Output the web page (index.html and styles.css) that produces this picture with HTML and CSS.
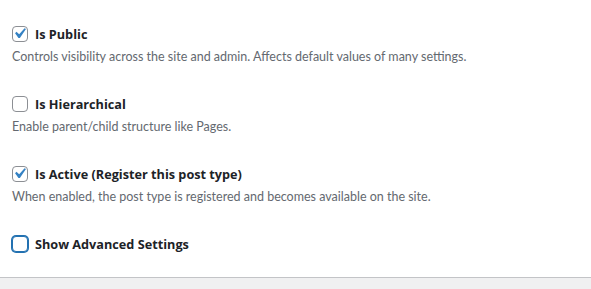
FILE: index.html
```html
<!DOCTYPE html>
<html>
<head>
<meta charset="utf-8">
<link rel="stylesheet" href="styles.css">
</head>
<body>
<div class="panel">
  <div class="field">
    <label class="row"><span class="box"><svg viewBox="0 0 20 20"><path d="M14.83 4.89l1.34.94-5.81 8.38H9.02L5.78 9.67l1.34-1.25 2.57 2.4z" fill="#3582c4"/></svg></span><span class="label">Is Public</span></label>
    <p class="desc">Controls visibility across the site and admin. Affects default values of many settings.</p>
  </div>
  <div class="field">
    <label class="row"><span class="box"></span><span class="label">Is Hierarchical</span></label>
    <p class="desc">Enable parent/child structure like Pages.</p>
  </div>
  <div class="field">
    <label class="row"><span class="box"><svg viewBox="0 0 20 20"><path d="M14.83 4.89l1.34.94-5.81 8.38H9.02L5.78 9.67l1.34-1.25 2.57 2.4z" fill="#3582c4"/></svg></span><span class="label">Is Active (Register this post type)</span></label>
    <p class="desc">When enabled, the post type is registered and becomes available on the site.</p>
  </div>
  <div class="field last">
    <label class="row"><span class="box focus"></span><span class="label">Show Advanced Settings</span></label>
  </div>
</div>
<div class="footer"></div>
</body>
</html>
```

FILE: styles.css
```css
html, body {
  margin: 0;
  padding: 0;
  background: #f0f0f1;
  font-family: Lato, "Open Sans", sans-serif;
  font-size: 13px;
}
.panel {
  background: #fff;
  padding: 26px 12px 0;
  border-bottom: 1px solid #c3c4c7;
  height: 278px;
  box-sizing: border-box;
}
.footer {
  height: 11px;
}
.field {
  margin-bottom: 30px;
}
.field.last {
  margin-bottom: 0;
}
.row {
  display: flex;
  align-items: center;
  height: 16px;
}
.box {
  width: 16px;
  height: 16px;
  box-sizing: border-box;
  border: 1px solid #8c8f94;
  border-radius: 4px;
  background: #fff;
  margin-right: 7px;
  position: relative;
  flex: none;
}
.box svg {
  position: absolute;
  left: -4px;
  top: -4px;
  width: 21px;
  height: 21px;
}
.box.focus {
  border-color: #2271b1;
  box-shadow: 0 0 0 1px #2271b1;
}
.label {
  font-family: "Open Sans", Lato, sans-serif;
  font-weight: 700;
  color: #1d2327;
  font-size: 12.7px;
}
.desc {
  margin: 6px 0 0;
  color: #646970;
  font-size: 12.5px;
  line-height: 18px;
}
```
